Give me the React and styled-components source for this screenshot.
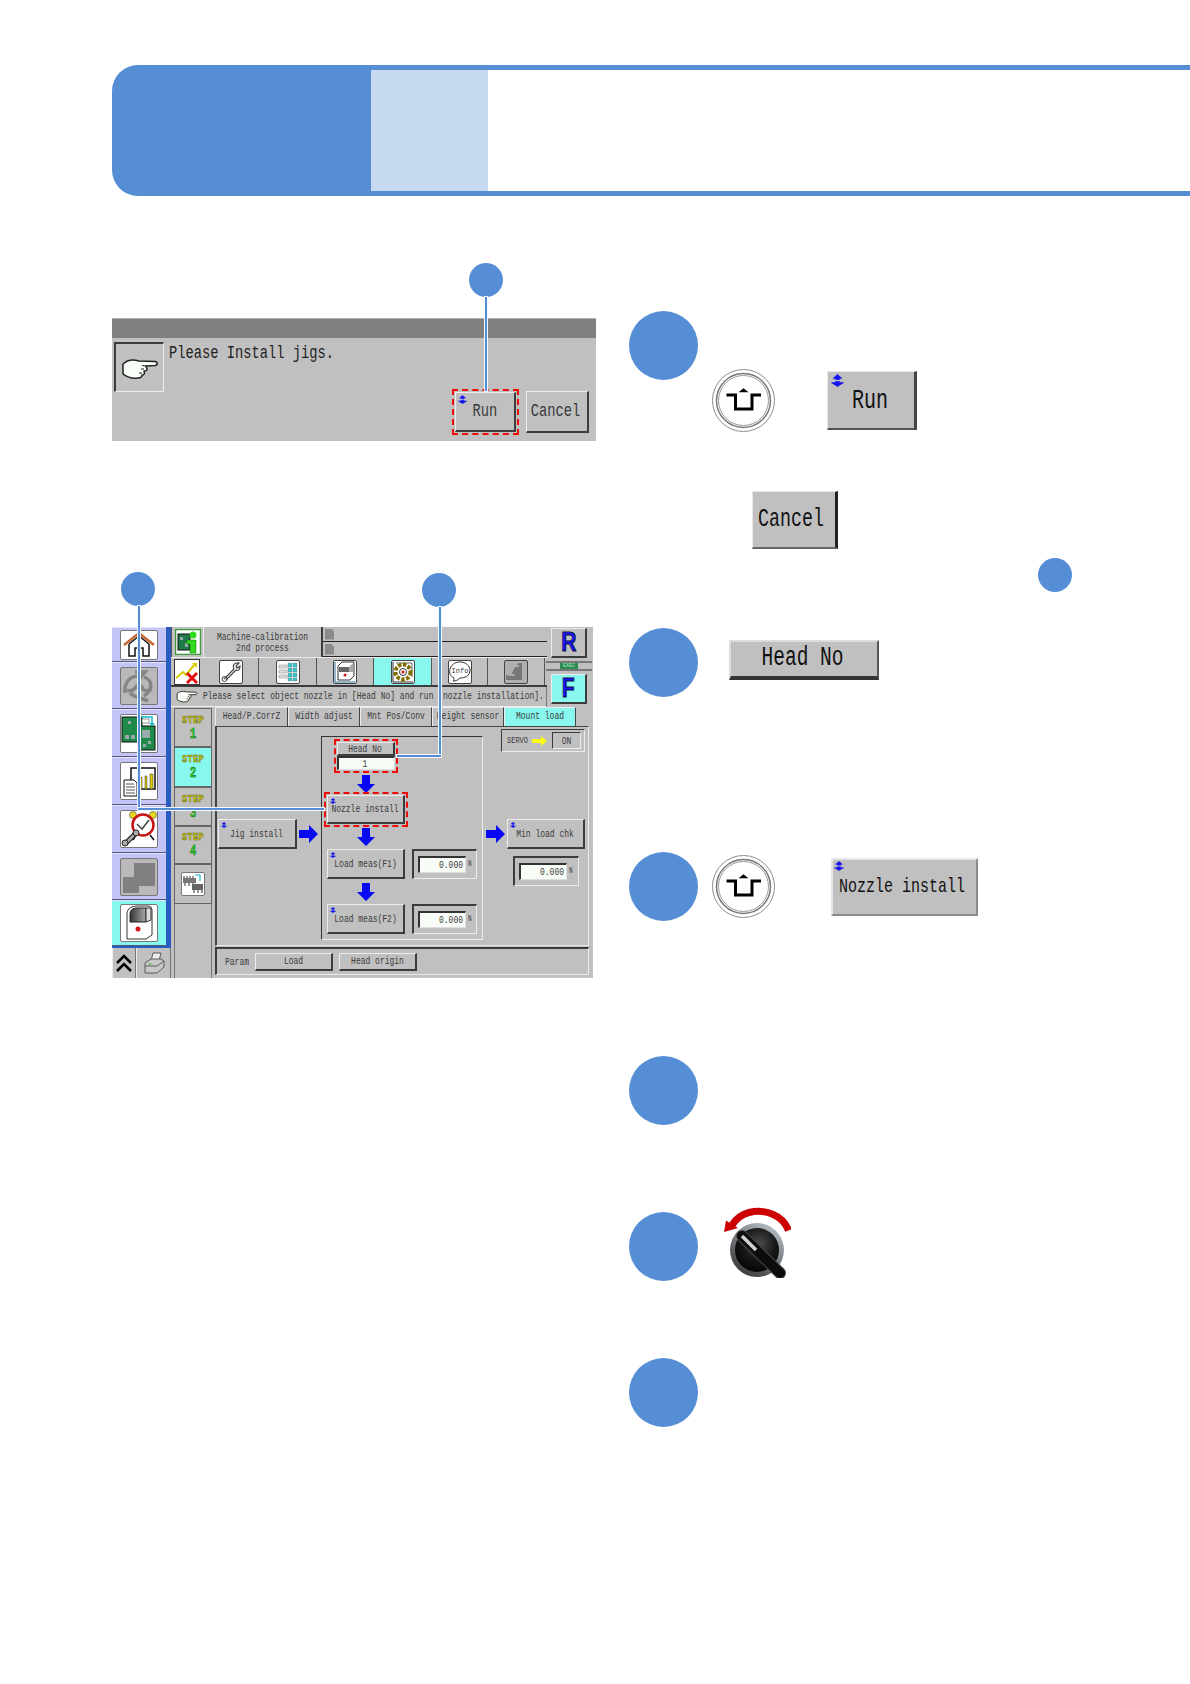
import React from "react";
import styled, { createGlobalStyle, css } from "styled-components";

const BLUE = "#558ed5";
const PALE = "#c6d9f1";
const GRAY = "#c0c0c0";
const CYAN = "#88f8ee";
const LAV = "#c4c4f6";

const Global = createGlobalStyle`
  html, body { margin: 0; padding: 0; background: #fff; }
  * { box-sizing: border-box; }
  #root { width: 1190px; height: 1684px; overflow: hidden; }
`;

const raised = css`
  border-style: solid;
  border-width: 1px 2px 2px 1px;
  border-color: #ececec #3c3c3c #3c3c3c #ececec;
`;
const sunken = css`
  border-style: solid;
  border-width: 2px 1px 1px 2px;
  border-color: #3c3c3c #ececec #ececec #3c3c3c;
`;

const Page = styled.div`
  width: 1190px;
  height: 1684px;
  padding-top: 65px;
  background: #fff;
`;
const Banner = styled.header`
  display: flex;
  height: 131px;
  margin-left: 112px;
`;
const BannerTab = styled.div`
  width: 259px;
  background: ${BLUE};
  border-radius: 26px 0 0 26px;
`;
const BannerBody = styled.div`
  flex: 1;
  border-top: 5px solid ${BLUE};
  border-bottom: 5px solid ${BLUE};
`;
const BannerShade = styled.div`
  width: 117px;
  height: 100%;
  background: ${PALE};
`;
const Columns = styled.main`
  display: grid;
  grid-template-columns: 484px 1fr;
  column-gap: 33px;
  margin-top: 67px;
  padding-left: 112px;
`;
const Figure = styled.section`
  position: relative;
  padding-top: 55px;
  margin-top: ${(p) => p.$top || 0}px;
`;
const Dot = styled.div`
  width: ${(p) => p.$size}px;
  height: ${(p) => p.$size}px;
  border-radius: 50%;
  background: ${BLUE};
  flex: none;
`;
const Callout = styled(Dot)`
  position: absolute;
  left: ${(p) => p.$x}px;
  top: ${(p) => p.$y}px;
`;
const Leader = styled.div`
  position: absolute;
  left: ${(p) => p.$x}px;
  top: ${(p) => p.$y}px;
  width: ${(p) => p.$w}px;
  height: ${(p) => p.$h}px;
  background: ${BLUE};
  box-shadow: 0 0 0 1px #f4f8ff;
  z-index: 3;
`;

const Label = styled.span`
  display: inline-block;
  font-family: "Liberation Mono", monospace;
  font-size: ${(p) => p.$size || 8}px;
  line-height: 1;
  white-space: pre;
  color: ${(p) => p.$color || "#3a3a3a"};
  transform: scaleY(1.38);
`;

const Dialog = styled.div`
  width: 484px;
  height: 123px;
  background: ${GRAY};
`;
const DialogBar = styled.div`
  height: 20px;
  background: #808080;
  border-top: 1px solid #b0b0b0;
`;
const DialogBody = styled.div`
  display: grid;
  grid-template-columns: 50px 1fr auto;
  column-gap: 5px;
  height: 103px;
  padding: 4px 7px 6px 2px;
`;
const HandBox = styled.div`
  ${sunken}
  width: 50px;
  height: 50px;
  display: flex;
  align-items: center;
  justify-content: center;
`;
const DialogText = styled.div`
  padding-top: 1px;
`;
const DialogActions = styled.div`
  display: flex;
  align-items: flex-end;
  gap: 7px;
  align-self: end;
`;

const Btn = styled.div`
  ${raised}
  position: relative;
  flex: none;
  width: ${(p) => p.$w}px;
  height: ${(p) => p.$h}px;
  background: ${GRAY};
  display: flex;
  align-items: center;
  justify-content: center;
  ${(p) => p.$gap && `margin-bottom:${p.$gap}px;`}
  ${(p) => p.$shift && `padding-right:${p.$shift}px;`}
`;
const Dashed = styled.div`
  border: 2px dashed #f00a0a;
  padding: 1px;
  flex: none;
  ${(p) => p.$mt && `margin-top:${p.$mt}px;`}
`;
const MarkSlot = styled.span`
  position: absolute;
  left: ${(p) => p.$x || 2}px;
  top: ${(p) => p.$y || 2}px;
  display: flex;
`;

/* ----- machine screen ------ */
const Screen = styled.div`
  display: grid;
  grid-template-columns: 59px 422px;
  width: 481px;
  height: 351px;
  background: ${GRAY};
  overflow: hidden;
`;
const Rail = styled.div`
  display: grid;
  grid-template-rows: 321px 30px;
`;
const RailTop = styled.div`
  display: flex;
  background: #2a5cc0;
  padding-right: 5px;
  padding-bottom: 2px;
`;
const NavList = styled.nav`
  flex: 1;
  display: flex;
  flex-direction: column;
`;
const NavCell = styled.div`
  height: ${(p) => p.$h}px;
  background: ${(p) => (p.$on ? CYAN : LAV)};
  border-top: 1px solid #e4e4ff;
  border-bottom: 1px solid #55557a;
  display: flex;
  align-items: center;
  justify-content: center;
  flex: none;
`;
const Tile = styled.div`
  width: ${(p) => p.$w || 38}px;
  height: ${(p) => p.$h}px;
  background: ${(p) => (p.$muted ? "#b9b9b9" : "#fff")};
  border: 1px solid #777;
  border-radius: 2px;
  display: flex;
  align-items: center;
  justify-content: center;
  flex: none;
`;
const RailFoot = styled.div`
  display: grid;
  grid-template-columns: 24px 1fr;
  background: ${GRAY};
`;
const FootCell = styled.div`
  border-left: 1px solid #ececec;
  border-right: 1px solid #777;
  display: flex;
  align-items: center;
  justify-content: center;
`;
const Main = styled.div`
  display: flex;
  flex-direction: column;
  min-width: 0;
`;
const Top = styled.div`
  display: grid;
  grid-template-columns: 376px 46px;
  height: 80px;
`;
const TopLeft = styled.div`
  display: flex;
  flex-direction: column;
`;
const TitleRow = styled.div`
  display: flex;
  height: 30px;
`;
const IconCell = styled.div`
  width: 32px;
  flex: none;
  display: flex;
  align-items: center;
  justify-content: center;
  ${(p) => p.$sunk && "border-left:1px solid #555;"}
`;
const TitleBox = styled.div`
  width: 120px;
  flex: none;
  border-left: 1px solid #ececec;
  border-right: 2px solid #3c3c3c;
  display: flex;
  flex-direction: column;
  align-items: center;
  justify-content: center;
  gap: 3px;
`;
const Slots = styled.div`
  flex: 1;
  display: flex;
  flex-direction: column;
`;
const Slot = styled.div`
  flex: 1;
  display: flex;
  align-items: center;
  ${(p) => p.$line && "border-bottom:1px solid #222;"}
`;
const SlotFlag = styled.div`
  width: 9px;
  height: 11px;
  margin-left: 2px;
  background: #8a8a8a;
  clip-path: polygon(0 0, 70% 0, 100% 30%, 100% 100%, 0 100%);
`;
const ToolRow = styled.div`
  display: flex;
  height: 30px;
  border-top: 1px solid #ececec;
  border-bottom: 2px solid #3c3c3c;
`;
const ToolCell = styled.div`
  width: ${(p) => p.$w}px;
  flex: none;
  background: ${(p) => (p.$on ? CYAN : GRAY)};
  border-right: 1px solid #555;
  display: flex;
  align-items: center;
  justify-content: center;
`;
const ToolTile = styled(Tile)`
  width: 24px;
  height: 24px;
  background: ${(p) => (p.$muted ? "#b0b0b0" : "#fff")};
  border-color: #444;
`;
const MsgRow = styled.div`
  display: flex;
  align-items: center;
  height: 20px;
  padding: 0 0 2px 5px;
  gap: 5px;
  border-bottom: 1px solid #ececec;
  border-right: 1px solid #777;
`;
const TopRight = styled.div`
  display: flex;
  flex-direction: column;
  align-items: center;
  padding: 1px 2px 0 0;
`;
const BigKey = styled.div`
  ${raised}
  width: 36px;
  height: ${(p) => p.$h}px;
  background: ${(p) => (p.$on ? CYAN : GRAY)};
  display: flex;
  align-items: center;
  justify-content: center;
`;
const BigGlyph = styled.span`
  display: inline-block;
  font-family: "Liberation Sans", sans-serif;
  font-weight: 700;
  font-size: 27px;
  line-height: 1;
  color: #1616ff;
  -webkit-text-stroke: 1px #101040;
  transform: scaleX(0.78);
`;
const Exec = styled.div`
  width: 46px;
  margin: 3px 0;
  height: 10px;
  border-top: 2px solid;
  border-bottom: 2px solid;
  border-color: #777;
  display: flex;
  justify-content: center;
`;
const ExecLight = styled.div`
  width: 18px;
  background: #2a8c50;
  font: 5px/6px "Liberation Mono", monospace;
  text-align: center;
  color: #bfe8cf;
`;
const Lower = styled.div`
  flex: 1;
  display: flex;
  min-height: 0;
`;
const StepCol = styled.div`
  width: 44px;
  flex: none;
  padding-left: 3px;
  padding-top: 1px;
  display: flex;
  flex-direction: column;
`;
const StepCell = styled.div`
  ${raised}
  width: 38px;
  height: ${(p) => p.$h}px;
  background: ${(p) => (p.$on ? CYAN : GRAY)};
  border-width: 1px;
  border-color: #666;
  display: flex;
  flex-direction: column;
  align-items: center;
  justify-content: center;
  gap: 4px;
  flex: none;
`;
const StepFill = styled.div`
  flex: 1;
  width: 38px;
  border-left: 1px solid #777;
  border-right: 1px solid #777;
`;
const StepWord = styled.span`
  display: inline-block;
  font: 700 9.2px/8px "Liberation Mono", monospace;
  color: #d2d200;
  -webkit-text-stroke: 0.3px #55501a;
  transform: scaleY(1.2);
`;
const StepNum = styled.span`
  display: inline-block;
  font: 700 11px/10px "Liberation Mono", monospace;
  color: #28dc28;
  -webkit-text-stroke: 0.3px #124412;
  transform: scaleY(1.4);
`;
const Work = styled.div`
  flex: 1;
  display: flex;
  flex-direction: column;
  min-width: 0;
`;
const TabRow = styled.div`
  display: flex;
  height: 19px;
  flex: none;
`;
const TabItem = styled.div`
  width: ${(p) => p.$w}px;
  background: ${(p) => (p.$on ? CYAN : GRAY)};
  border-top: 1px solid #ececec;
  border-left: 1px solid #ececec;
  border-right: 1px solid #444;
  display: flex;
  align-items: center;
  justify-content: center;
  padding-bottom: 2px;
`;
const Panel = styled.div`
  display: flex;
  align-items: flex-start;
  width: 374px;
  height: 220px;
  padding: 9px 0 0 1px;
  border-style: solid;
  border-width: 1px 1px 1px 2px;
  border-color: #444 #ececec #ececec #444;
`;
const Side = styled.div`
  display: flex;
  align-items: center;
  gap: 2px;
  margin-top: 83px;
`;
const Arrow = styled.svg`
  flex: none;
  display: block;
  ${(p) => p.$mt !== undefined && `margin-top:${p.$mt}px;`}
`;
const Group = styled.div`
  width: 162px;
  height: 204px;
  margin-left: 3px;
  flex: none;
  padding: 2px 0 0 1px;
  border-style: solid;
  border-width: 1px;
  border-color: #333 #ececec #ececec #333;
`;
const FlowCol = styled.div`
  display: flex;
  flex-direction: column;
  align-items: center;
  width: 85px;
`;
const HeadStack = styled.div`
  display: flex;
  flex-direction: column;
  width: 58px;
`;
const Entry = styled.div`
  width: ${(p) => p.$w}px;
  height: ${(p) => p.$h}px;
  flex: none;
  background: #f8fcf6;
  border-style: solid;
  border-width: 2px 1px 1px 2px;
  border-color: #333 #ddd #ddd #333;
  display: flex;
  align-items: center;
  justify-content: ${(p) => p.$align || "center"};
  padding-right: 2px;
`;
const LoadRow = styled.div`
  display: flex;
  gap: 7px;
  margin-left: 4px;
  margin-top: 3px;
`;
const Readout = styled.div`
  ${sunken}
  width: ${(p) => p.$w}px;
  height: 30px;
  flex: none;
  display: flex;
  align-items: center;
  gap: 2px;
  padding-left: 4px;
  ${(p) => p.$m && `margin:${p.$m};`}
`;
const RightCol = styled.div`
  width: 99px;
  margin-left: 3px;
  flex: none;
  display: flex;
  flex-direction: column;
`;
const Servo = styled.div`
  display: flex;
  align-items: center;
  align-self: flex-end;
  width: 84px;
  height: 23px;
  margin-top: -7px;
  padding-left: 5px;
  gap: 4px;
  ${sunken}
  border-width: 1px;
`;
const ServoState = styled.div`
  ${sunken}
  border-width: 1px;
  width: 29px;
  height: 17px;
  display: flex;
  align-items: center;
  justify-content: center;
  margin-left: 1px;
`;
const MinRow = styled.div`
  display: flex;
  align-items: center;
  gap: 2px;
  margin-top: 67px;
`;
const Foot = styled.div`
  display: flex;
  align-items: center;
  width: 374px;
  height: 28px;
  margin-top: 1px;
  padding-left: 8px;
  gap: 6px;
  ${sunken}
`;
const ParamLabel = styled.div`
  display: flex;
  width: 24px;
`;

/* ----- right column ----- */
const Steps = styled.section`
  display: flex;
  flex-direction: column;
  padding-top: 48px;
`;
const Step = styled.article`
  display: grid;
  grid-template-columns: 69px 1fr;
  height: ${(p) => p.$h}px;
`;
const StepBody = styled.div`
  padding: ${(p) => p.$pad || "0"};
`;
const KeyRow = styled.div`
  display: flex;
  align-items: flex-start;
  gap: ${(p) => p.$gap}px;
`;
const KeyRun = styled(Btn)`
  margin-top: 2px;
  padding-top: 2px;
  border-width: 1px 3px 2px 1px;
  border-color: #e8e8e8 #444 #555 #e8e8e8;
`;
const KeyCancel = styled(Btn)`
  margin: 59px 0 0 40px;
  border-width: 1px 3px 2px 1px;
  border-color: #e8e8e8 #222 #666 #e8e8e8;
`;
const KeyHead = styled(Btn)`
  border-width: 2px 2px 4px 2px;
  border-color: #ddd #555 #333 #ddd;
`;
const KeyNozzle = styled(Btn)`
  margin-top: 3px;
  border-width: 2px;
  border-color: #e6e6e6 #8a8a8a #8a8a8a #e6e6e6;
`;
const RefDot = styled(Dot)`
  margin: 9px 0 0 326px;
`;
const KnobSlot = styled.div`
  margin-top: -5px;
`;

/* ----- drawings ------ */
const Mark = ({ s = 8 }) => (
  <svg width={s} height={s} viewBox="0 0 12 12">
    <path d="M6 .5 10 4H8V5H4V4H2Z M4 7H8V8H11.500L6 11.500 .5 8H4Z" fill="#1414f0" stroke="#1414f0" strokeWidth=".7" />
  </svg>
);
const Hand = ({ w = 36, h = 24 }) => (
  <svg width={w} height={h} viewBox="0 0 36 24">
    <path d="M1 8C5 4 11 3 17 5L33 5.500C36 6 36 9 33 9.500L24 10 25 13C25 15 24 15 22 15 23 18 22 19 20 19 20 21 19 22 16 22 10 23 5 21 1 18Z" fill="#f8fff6" stroke="#222" strokeWidth="1.500" strokeLinejoin="round" />
    <path d="M20 9.500 24 10M19 13H22M17 17H20" stroke="#222" strokeWidth="1.200" fill="none" />
  </svg>
);
const ShiftKey = () => (
  <svg width="63" height="63" viewBox="0 0 63 63" style={{ flex: "none", display: "block" }}>
    <circle cx="31.5" cy="31.500" r="31" fill="#fff" stroke="#8c8c8c" />
    <circle cx="31.5" cy="31.500" r="27" fill="#fff" stroke="#777" strokeWidth="1.500" />
    <circle cx="31.5" cy="31.500" r="25" fill="#fff" stroke="#999" />
    <path d="M14.500 26H23.500V40H40V26H49" fill="none" stroke="#000" strokeWidth="3" />
    <path d="M26.500 23.200 31.500 19.200 36.500 23.200Z" fill="#000" />
  </svg>
);
const Knob = () => (
  <svg width="68" height="71" viewBox="0 0 68 71" style={{ display: "block" }}>
    <defs>
      <radialGradient id="kb" cx=".55" cy=".35" r=".65">
        <stop offset="0" stopColor="#4a4a4a" />
        <stop offset=".6" stopColor="#161616" />
        <stop offset="1" stopColor="#050505" />
      </radialGradient>
      <linearGradient id="kr" x1=".2" y1="1" x2=".8" y2="0">
        <stop offset="0" stopColor="#333" />
        <stop offset="1" stopColor="#b8c0c8" />
      </linearGradient>
    </defs>
    <path d="M65.500 23.500C60 8 42 1.500 26 5.500 18 7.500 13 12 9 18" fill="none" stroke="#cc0000" strokeWidth="7" />
    <path d="M1 25 3 13.500 15 21Z" fill="#cc0000" />
    <circle cx="34" cy="43" r="27" fill="url(#kr)" />
    <circle cx="34" cy="43" r="22" fill="url(#kb)" />
    <path d="M19 29 57 66" stroke="#4c4c4c" strokeWidth="12" strokeLinecap="round" />
    <path d="M19 29 57 66" stroke="#0c0c0c" strokeWidth="10" strokeLinecap="round" />
    <path d="M19 29 33 43" stroke="#d0d0d0" strokeWidth="3.500" />
  </svg>
);
const DownArrow = ({ mt }) => (
  <Arrow $mt={mt} width="18" height="18" viewBox="0 0 18 18">
    <path d="M5 0H13V9H18L9 18 0 9H5Z" fill="#0808f4" />
  </Arrow>
);
const RightArrow = () => (
  <Arrow width="19" height="18" viewBox="0 0 19 18">
    <path d="M0 5H10V0L19 9 10 18V13H0Z" fill="#0808f4" />
  </Arrow>
);
const HomeIcon = () => (
  <svg width="34" height="27" viewBox="0 0 34 27">
    <path d="M2 14 17 2 32 14" fill="none" stroke="#c86a30" strokeWidth="2.500" />
    <path d="M7 13V25H13V17H21V25H27V13M17 5 7 13M17 5 27 13" fill="none" stroke="#111" strokeWidth="1.500" />
  </svg>
);
const SwirlIcon = () => (
  <svg width="36" height="36" viewBox="0 0 36 36" fill="none" stroke="#858585" strokeWidth="3.500">
    <path d="M14 4H24C20 8 17 12 17 19" />
    <path d="M4 25C3 14 9 9 16 8" />
    <path d="M23 9C33 13 31 23 23 28" />
    <path d="M9 25C14 30 21 30 27 33" />
    <path d="M20 17C22 23 24 24 31 21" />
    <path d="M6 22C10 24 14 22 16 17" />
  </svg>
);
const PcbIcon = () => (
  <svg width="36" height="36" viewBox="0 0 36 36">
    <rect x="1" y="2" width="20" height="25" fill="#1f8a4a" stroke="#111" />
    <rect x="17" y="11" width="17" height="24" fill="#1f8a4a" stroke="#111" />
    <path d="M7 6h3v3H7zM4 20h4v4H4zM10 20h4v4h-4zM21 15h8v8h-8zM27 26h3v3h-3zM22 29h3v3h-3z" fill="#9aa" />
    <path d="M20 2H31V9" fill="none" stroke="#10b8c8" strokeWidth="1.500" />
    <path d="M28 8H34L31 11Z" fill="#10b8c8" />
    <rect x="21" y="4" width="7" height="4" fill="#fff" stroke="#333" strokeWidth=".5" />
  </svg>
);
const ChartIcon = () => (
  <svg width="34" height="34" viewBox="0 0 34 34">
    <rect x="9" y="4" width="24" height="21" fill="#fff" stroke="#111" strokeWidth="1.500" />
    <path d="M17 13h3v12h-3zM23 12h2v13h-2zM28 10h3v15h-3z" fill="#d8c800" stroke="#333" strokeWidth=".5" />
    <path d="M2 16H12L15 19V32H2Z" fill="#fff" stroke="#111" />
    <path d="M4 20H12M4 23H13M4 26H13M4 29H13" stroke="#555" />
  </svg>
);
const AlarmIcon = () => (
  <svg width="36" height="36" viewBox="0 0 36 36">
    <circle cx="12" cy="4" r="3.500" fill="#e8d820" stroke="#333" strokeWidth=".5" />
    <circle cx="32" cy="4" r="3.500" fill="#e8d820" stroke="#333" strokeWidth=".5" />
    <path d="M15 24 12 29M29 24 33 29" stroke="#111" strokeWidth="1.500" />
    <circle cx="22" cy="14" r="10.500" fill="#fff" stroke="#c81414" strokeWidth="2.500" />
    <path d="M16 13 21 18 28 9" fill="none" stroke="#444" strokeWidth="1.500" />
    <path d="M4 33 15 22" stroke="#222" strokeWidth="5" />
    <path d="M4 33 15 22" stroke="#aaa" strokeWidth="2.500" />
    <circle cx="15" cy="22" r="3" fill="#aaa" stroke="#222" />
    <circle cx="4" cy="32" r="3" fill="#aaa" stroke="#222" />
  </svg>
);
const BlocksIcon = () => (
  <svg width="36" height="36" viewBox="0 0 36 36">
    <path d="M13 4H34V27H18V34H2V18H13Z" fill="#808080" />
  </svg>
);
const MachineIcon = () => (
  <svg width="30" height="36" viewBox="0 0 30 36">
    <defs>
      <linearGradient id="mw" x1="0" y1="0" x2="1" y2="0">
        <stop offset="0" stopColor="#333" />
        <stop offset="1" stopColor="#aaa" />
      </linearGradient>
    </defs>
    <path d="M3 34V9C3 3 8 1 14 1H24C27 1 28 3 28 6V30L22 34Z" fill="#fff" stroke="#333" />
    <path d="M6 17V9C6 5 9 3 13 3H22V17Z" fill="url(#mw)" stroke="#222" />
    <path d="M22 3H27V15L22 17Z" fill="#ddd" stroke="#333" />
    <circle cx="14" cy="24" r="2.500" fill="#d01818" />
  </svg>
);
const Chevrons = () => (
  <svg width="18" height="18" viewBox="0 0 18 18" fill="none" stroke="#000" strokeWidth="2.500">
    <path d="M2 9 9 2 16 9" />
    <path d="M2 17 9 10 16 17" />
  </svg>
);
const PrinterIcon = () => (
  <svg width="22" height="22" viewBox="0 0 22 22" fill="#c8c8c8" stroke="#5a5a5a">
    <path d="M10 1H18L16 9H8Z" fill="#eee" />
    <path d="M2 11 8 7H18L21 9V15L14 21H2Z" />
    <path d="M2 14H14L21 9" fill="none" />
    <circle cx="7" cy="12" r="1" fill="#4b4" stroke="none" />
  </svg>
);
const OperatorIcon = () => (
  <svg width="26" height="26" viewBox="0 0 26 26">
    <rect x=".5" y=".5" width="25" height="25" fill="#fff" stroke="#3a9a3a" strokeWidth="1.500" />
    <rect x="3" y="5" width="12" height="16" fill="#1f7a4a" stroke="#111" />
    <path d="M5 8h3v3H5zM10 14h3v4h-3z" fill="#9aa" />
    <circle cx="18" cy="6" r="3.500" fill="#30dc20" />
    <path d="M12 11H21V24H15V15H12Z" fill="#30dc20" stroke="#116611" strokeWidth=".5" />
  </svg>
);
const TrendXIcon = () => (
  <svg width="26" height="26" viewBox="0 0 26 26">
    <rect x=".5" y=".5" width="25" height="25" fill="#fff" stroke="#333" />
    <path d="M2 19 9 13 12 16 21 5" fill="none" stroke="#d8c800" strokeWidth="2" />
    <path d="M18 4H23V9Z" fill="#d8c800" />
    <path d="M13 14 23 24M23 14 13 24" stroke="#e01010" strokeWidth="3" />
  </svg>
);
const WrenchIcon = () => (
  <svg width="20" height="20" viewBox="0 0 20 20" fill="none" stroke="#444">
    <path d="M3 17 13 7M5 18 15 8" strokeWidth="1.200" />
    <path d="M13 7C11 3 14 0 18 1L15 4 16 6 19 4C19 8 17 9 15 8" strokeWidth="1.200" />
    <circle cx="3.500" cy="17" r="2.500" />
  </svg>
);
const TableIcon = () => (
  <svg width="20" height="20" viewBox="0 0 20 20">
    <path d="M1 3h8v3H1zM1 8h8v3H1zM1 13h8v3H1z" fill="#ddd" stroke="#888" strokeWidth=".5" />
    <path d="M10 1h4v4h-4zM15 1h4v4h-4zM10 6h4v4h-4zM15 6h4v4h-4zM10 11h4v4h-4zM15 11h4v4h-4zM10 16h4v3h-4zM15 16h4v3h-4z" fill="#38c8d0" stroke="#777" strokeWidth=".4" />
  </svg>
);
const MachineGraphIcon = () => (
  <svg width="22" height="22" viewBox="0 0 22 22">
    <path d="M1 1V21H21" fill="none" stroke="#2a6a90" />
    <path d="M4 5 8 1H20V15L16 19H4Z" fill="#fff" stroke="#333" />
    <path d="M5 6H15V11H5Z" fill="#666" />
    <path d="M15 6 19 2V11L15 11Z" fill="#aaa" />
    <circle cx="11" cy="14" r="1.500" fill="#d01818" />
  </svg>
);
const GearIcon = () => (
  <svg width="22" height="22" viewBox="0 0 22 22">
    <path d="M1 1V21H21" fill="none" stroke="#333" />
    <path d="M4 2H20V16" fill="none" stroke="#666" />
    <circle cx="11" cy="11" r="7.500" fill="none" stroke="#807000" strokeWidth="4" strokeDasharray="3.500 1.500" />
    <circle cx="11" cy="11" r="3.500" fill="#fff" stroke="#333" />
    <circle cx="11" cy="11" r="1.500" fill="#d01818" />
  </svg>
);
const InfoBubble = () => (
  <svg width="22" height="22" viewBox="0 0 22 22">
    <path d="M5 17C1 15 0 12 1 8 3 2 8 1 11 1 17 1 21 5 21 9 21 15 16 17 11 17 9 19 7 20 4 20 5 19 5 18 5 17Z" fill="#fff" stroke="#333" />
    <text x="11" y="12" fontFamily="Liberation Mono" fontSize="7" textAnchor="middle" fill="#333">Info</text>
  </svg>
);
const GrayMachine = () => (
  <svg width="22" height="22" viewBox="0 0 22 22">
    <path d="M1 19V14H6L10 6H14V4L11 4 14 2H17V19Z" fill="#777" />
    <path d="M3 15H10V13H3Z" fill="#aaa" />
  </svg>
);
const ModuleIcon = () => (
  <svg width="22" height="20" viewBox="0 0 22 20">
    <path d="M1 4H14V9H1Z" fill="#777" />
    <path d="M2 4V2M5 4V2M8 4V2M11 4V2M3 9V12M7 9V12M11 9V12" stroke="#333" />
    <path d="M10 10H21V16H10Z" fill="#666" />
    <path d="M12 16V19M16 16V19M20 16V19" stroke="#333" />
    <path d="M13 1H18V7" fill="none" stroke="#18b8c8" strokeWidth="1.200" />
  </svg>
);
const ServoArrow = () => (
  <svg width="15" height="10" viewBox="0 0 15 10" style={{ flex: "none" }}>
    <path d="M0 3H9V0L15 5 9 10V7H0Z" fill="#fcfc10" />
  </svg>
);

const navItems = [
  { h: 35, t: 30, icon: <HomeIcon /> },
  { h: 47, t: 38, muted: true, icon: <SwirlIcon /> },
  { h: 48, t: 39, icon: <PcbIcon /> },
  { h: 48, t: 38, icon: <ChartIcon /> },
  { h: 48, t: 38, icon: <AlarmIcon /> },
  { h: 47, t: 38, muted: true, icon: <BlocksIcon /> },
  { h: 46, t: 38, on: true, icon: <MachineIcon /> },
];
const tools = [
  { w: 56, icon: <WrenchIcon /> },
  { w: 58, icon: <TableIcon /> },
  { w: 57, icon: <MachineGraphIcon /> },
  { w: 58, on: true, icon: <GearIcon /> },
  { w: 56, icon: <InfoBubble /> },
  { w: 57, muted: true, icon: <GrayMachine /> },
];
const tabs = [
  { w: 73, t: "Head/P.CorrZ" },
  { w: 72, t: "Width adjust" },
  { w: 72, t: "Mnt Pos/Conv" },
  { w: 72, t: "Height sensor" },
  { w: 72, t: "Mount load", on: true },
];
const stepList = [
  { h: 39, n: 1 },
  { h: 40, n: 2, on: true },
  { h: 39, n: 3 },
  { h: 38, n: 4 },
];

const Load = ({ name }) => (
  <LoadRow>
    <Btn $w={78} $h={30}>
      <MarkSlot><Mark s={6} /></MarkSlot>
      <Label>{name}</Label>
    </Btn>
    <Readout $w={65}>
      <Entry $w={48} $h={17} $align="flex-end"><Label>0.000</Label></Entry>
      <Label $size={6}>N</Label>
    </Readout>
  </LoadRow>
);

export default function App() {
  return (
    <Page>
      <Global />
      <Banner>
        <BannerTab />
        <BannerBody><BannerShade /></BannerBody>
      </Banner>
      <Columns>
        <div>
          <Figure>
            <Callout $size={34} $x={357} $y={0} />
            <Leader $x={373} $y={34} $w={2} $h={94} />
            <Dialog>
              <DialogBar />
              <DialogBody>
                <HandBox><Hand /></HandBox>
                <DialogText><Label $size={13.75} $color="#222">Please Install jigs.</Label></DialogText>
                <DialogActions>
                  <Dashed>
                    <Btn $w={61} $h={40}>
                      <MarkSlot><Mark s={9} /></MarkSlot>
                      <Label $size={13.75}>Run</Label>
                    </Btn>
                  </Dashed>
                  <Btn $w={63} $h={42} $gap={2} $shift={3}><Label $size={13.75}>Cancel</Label></Btn>
                </DialogActions>
              </DialogBody>
            </Dialog>
          </Figure>
          <Figure $top={131}>
            <Callout $size={34} $x={9} $y={0} />
            <Callout $size={34} $x={310} $y={1} />
            <Leader $x={26} $y={34} $w={2} $h={204} />
            <Leader $x={26} $y={236} $w={186} $h={2} />
            <Leader $x={327} $y={35} $w={2} $h={150} />
            <Leader $x={285} $y={183} $w={44} $h={2} />
            <Screen>
              <Rail>
                <RailTop>
                  <NavList>
                    {navItems.map((n, i) => (
                      <NavCell key={i} $h={n.h} $on={n.on}>
                        <Tile $h={n.t} $muted={n.muted}>{n.icon}</Tile>
                      </NavCell>
                    ))}
                  </NavList>
                </RailTop>
                <RailFoot>
                  <FootCell><Chevrons /></FootCell>
                  <FootCell><PrinterIcon /></FootCell>
                </RailFoot>
              </Rail>
              <Main>
                <Top>
                  <TopLeft>
                    <TitleRow>
                      <IconCell $sunk><OperatorIcon /></IconCell>
                      <TitleBox>
                        <Label>Machine-calibration</Label>
                        <Label>2nd process</Label>
                      </TitleBox>
                      <Slots>
                        <Slot $line><SlotFlag /></Slot>
                        <Slot $line><SlotFlag /></Slot>
                      </Slots>
                    </TitleRow>
                    <ToolRow>
                      <IconCell><TrendXIcon /></IconCell>
                      {tools.map((t, i) => (
                        <ToolCell key={i} $w={t.w} $on={t.on}>
                          <ToolTile $muted={t.muted} $h={24}>{t.icon}</ToolTile>
                        </ToolCell>
                      ))}
                    </ToolRow>
                    <MsgRow>
                      <Hand w={22} h={14} />
                      <Label>Please select object nozzle in [Head No] and run [nozzle installation].</Label>
                    </MsgRow>
                  </TopLeft>
                  <TopRight>
                    <BigKey $h={30}><BigGlyph>R</BigGlyph></BigKey>
                    <Exec><ExecLight>EXEC</ExecLight></Exec>
                    <BigKey $h={30} $on><BigGlyph>F</BigGlyph></BigKey>
                  </TopRight>
                </Top>
                <Lower>
                  <StepCol>
                    {stepList.map((s) => (
                      <StepCell key={s.n} $h={s.h} $on={s.on}>
                        <StepWord>STEP</StepWord>
                        <StepNum>{s.n}</StepNum>
                      </StepCell>
                    ))}
                    <StepCell $h={40}>
                      <Tile $w={24} $h={24}><ModuleIcon /></Tile>
                    </StepCell>
                    <StepFill />
                  </StepCol>
                  <Work>
                    <TabRow>
                      {tabs.map((t) => (
                        <TabItem key={t.t} $w={t.w} $on={t.on}><Label>{t.t}</Label></TabItem>
                      ))}
                    </TabRow>
                    <Panel>
                      <Side>
                        <Btn $w={79} $h={30} $shift={1}>
                          <MarkSlot><Mark s={6} /></MarkSlot>
                          <Label>Jig install</Label>
                        </Btn>
                        <RightArrow />
                      </Side>
                      <Group>
                        <FlowCol>
                          <Dashed>
                            <HeadStack>
                              <Btn $w={58} $h={14}><Label>Head No</Label></Btn>
                              <Entry $w={58} $h={14}><Label>1</Label></Entry>
                            </HeadStack>
                          </Dashed>
                          <DownArrow mt={2} />
                          <Dashed $mt={-1}>
                            <Btn $w={78} $h={29}>
                              <MarkSlot><Mark s={6} /></MarkSlot>
                              <Label>Nozzle install</Label>
                            </Btn>
                          </Dashed>
                          <DownArrow mt={1} />
                        </FlowCol>
                        <Load name="Load meas(F1)" />
                        <FlowCol><DownArrow mt={4} /></FlowCol>
                        <Load name="Load meas(F2)" />
                      </Group>
                      <RightCol>
                        <Servo>
                          <Label $size={7}>SERVO</Label>
                          <ServoArrow />
                          <ServoState><Label>ON</Label></ServoState>
                        </Servo>
                        <MinRow>
                          <RightArrow />
                          <Btn $w={78} $h={30} $shift={1}>
                            <MarkSlot><Mark s={6} /></MarkSlot>
                            <Label>Min load chk</Label>
                          </Btn>
                        </MinRow>
                        <Readout $w={66} $m="7px 0 0 27px">
                          <Entry $w={48} $h={17} $align="flex-end"><Label>0.000</Label></Entry>
                          <Label $size={6}>N</Label>
                        </Readout>
                      </RightCol>
                    </Panel>
                    <Foot>
                      <ParamLabel><Label>Param</Label></ParamLabel>
                      <Btn $w={78} $h={18}><Label>Load</Label></Btn>
                      <Btn $w={78} $h={18}><Label>Head origin</Label></Btn>
                    </Foot>
                  </Work>
                </Lower>
              </Main>
            </Screen>
          </Figure>
        </div>
        <Steps>
          <Step $h={317}>
            <Dot $size={69} />
            <StepBody $pad="58px 0 0 14px">
              <KeyRow $gap={52}>
                <ShiftKey />
                <KeyRun $w={90} $h={59} $shift={2}>
                  <MarkSlot $x={3} $y={2}><Mark s={13} /></MarkSlot>
                  <Label $size={20} $color="#111">Run</Label>
                </KeyRun>
              </KeyRow>
              <KeyCancel $w={86} $h={58} $shift={6}><Label $size={18.300} $color="#111">Cancel</Label></KeyCancel>
              <RefDot $size={34} />
            </StepBody>
          </Step>
          <Step $h={224}>
            <Dot $size={69} />
            <StepBody $pad="12px 0 0 31px">
              <KeyHead $w={150} $h={40} $shift={3}><Label $size={19.500} $color="#111">Head No</Label></KeyHead>
            </StepBody>
          </Step>
          <Step $h={204}>
            <Dot $size={69} />
            <StepBody $pad="3px 0 0 14px">
              <KeyRow $gap={56}>
                <ShiftKey />
                <KeyNozzle $w={147} $h={58} $shift={5}>
                  <MarkSlot $x={1} $y={1}><Mark s={10} /></MarkSlot>
                  <Label $size={15} $color="#111">Nozzle install</Label>
                </KeyNozzle>
              </KeyRow>
            </StepBody>
          </Step>
          <Step $h={156}>
            <Dot $size={69} />
          </Step>
          <Step $h={146}>
            <Dot $size={69} />
            <StepBody $pad="0 0 0 25px"><KnobSlot><Knob /></KnobSlot></StepBody>
          </Step>
          <Step $h={100}>
            <Dot $size={69} />
          </Step>
        </Steps>
      </Columns>
    </Page>
  );
}
